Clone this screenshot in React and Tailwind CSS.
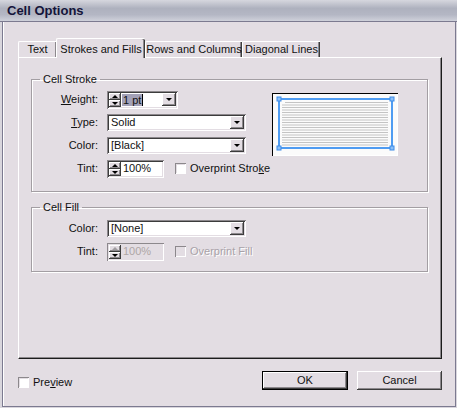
import React from 'react';

const sunken = 'shadow-[inset_1px_1px_0_#8c888c,inset_-1px_-1px_0_#ffffff,inset_2px_2px_0_#3c3c3c,inset_-2px_-2px_0_#e3dde3]';
const raised = 'shadow-[inset_-1px_-1px_0_#3c3c3c,inset_1px_1px_0_#ffffff,inset_-2px_-2px_0_#8c888c]';

function Arrow({ dir = 'down', dim = false }) {
  if (dir === 'down') {
    return <span className={`w-0 h-0 border-x-[3px] border-x-transparent border-t-[3px] ${dim ? 'border-t-[#a09ca0]' : 'border-t-black'}`} />;
  }
  return <span className={`w-0 h-0 border-x-[3px] border-x-transparent border-b-[3px] ${dim ? 'border-b-[#a09ca0]' : 'border-b-black'}`} />;
}

function Spinner({ dimUp = false }) {
  return (
    <div className="flex flex-col w-[12px] h-full py-[2px] ml-[2px]">
      <div className={`flex-1 flex items-center justify-center bg-[#e3dde3] ${raised}`}>
        <Arrow dir="up" dim={dimUp} />
      </div>
      <div className={`flex-1 flex items-center justify-center bg-[#e3dde3] ${raised}`}>
        <Arrow dir="down" />
      </div>
    </div>
  );
}

function DropButton() {
  return (
    <div className={`w-[14px] h-[13px] mr-[2px] flex items-center justify-center bg-[#e3dde3] ${raised}`}>
      <Arrow dir="down" />
    </div>
  );
}

function Select({ value }) {
  return (
    <div className={`w-[139px] h-[17px] flex items-center bg-white ${sunken}`}>
      <span className="flex-1 pl-[4px] leading-none">{value}</span>
      <DropButton />
    </div>
  );
}

function Check({ disabled = false }) {
  return (
    <span className={`inline-block w-[11px] h-[11px] ${disabled ? 'bg-[#e3dde3]' : 'bg-white'} shadow-[inset_1px_1px_0_#8c888c,inset_-1px_-1px_0_#ffffff,inset_2px_2px_0_#e3dde3]`} />
  );
}

function Row({ label, children }) {
  return (
    <div className="flex items-center h-[17px]">
      <div className="w-[67px] text-right pr-[1px]">{label}</div>
      <div className="ml-[8px] flex items-center">{children}</div>
    </div>
  );
}

function Preview() {
  const lines = Array.from({ length: 18 }, (_, i) => 9.5 + i * 2.5);
  return (
    <div className="w-[126px] h-[63px] bg-[#fbfbfb] shadow-[inset_1px_1px_0_#000,inset_-1px_-1px_0_#fff] mt-[2px]">
      <svg width="126" height="63" viewBox="0 0 126 63">
        {lines.map((y, i) => (
          <line key={i} x1={i === 0 ? 13 : 10} x2="116" y1={y} y2={y} stroke="#c4c4c4" strokeWidth="1" />
        ))}
        <rect x="7" y="6" width="113" height="49" fill="none" stroke="#4f9cf2" strokeWidth="2" />
        {[[7, 6], [120, 6], [7, 55], [120, 55]].map(([x, y], i) => (
          <rect key={i} x={x - 2} y={y - 2} width="4" height="4" fill="#8cc0f8" stroke="#3f8ce8" strokeWidth="1" />
        ))}
      </svg>
    </div>
  );
}

const etched = 'border border-[#a39ea3] shadow-[1px_1px_0_#ffffff,inset_1px_1px_0_#ffffff]';
const tab = 'h-[16px] flex items-center justify-center border-t border-l border-white shadow-[inset_-1px_0_0_#3c3c3c,inset_-2px_0_0_#8c888c] rounded-tl-[2px]';

export default function App() {
  return (
    <div className="w-[457px] h-[408px] flex flex-col bg-[#d9d6dd] pb-[1px] text-[11px] text-[#111] font-['Liberation_Sans',Arial,sans-serif]">
      {/* title bar */}
      <div className="h-[22px] flex items-center px-[7px] bg-[linear-gradient(to_bottom,#d6d7de_0%,#aeb1be_40%,#b4b7c4_70%,#cfd1da_100%)] border-b border-[#7c7a90]">
        <span className="font-bold text-[13px] text-[#14143a]">Cell Options</span>
      </div>

      <div className="flex-1 mx-[2px] mr-[1px] bg-[#e3dde3] border-x border-b border-[#7c7a90] pl-[15px] pt-[16px] shadow-[inset_1px_0_0_#ffffff]">
        {/* tabs */}
        <div className="flex items-end h-[19px]">
          <div className={`w-[38px] ${tab} shadow-[inset_-1px_0_0_#8c888c]`}>Text</div>
          <div className="relative z-10 w-[89px] h-[20px] -mb-[1px] flex items-start justify-center pt-[2px] bg-[#e3dde3] border-t border-l border-white shadow-[inset_-1px_0_0_#3c3c3c,inset_-2px_0_0_#8c888c] rounded-t-[2px]">
            Strokes and Fills
          </div>
          <div className={`w-[97px] ${tab}`}>Rows and Columns</div>
          <div className={`w-[78px] ${tab}`}>Diagonal Lines</div>
        </div>

        {/* panel */}
        <div className="w-[424px] h-[302px] border-t border-l border-white border-r border-b border-r-[#1c1c1c] border-b-[#1c1c1c] shadow-[inset_-1px_-1px_0_#8c888c] pl-[12px] pt-[15px]">
          <fieldset className={`w-[397px] h-[119px] px-0 pt-[5px] pb-0 ${etched}`}>
            <legend className="ml-[8px] px-[3px] leading-[13px]">Cell Stroke</legend>
            <div className="flex">
              <div className="w-[240px] flex flex-col gap-[6px]">
                <Row label={<><span className="underline">W</span>eight:</>}>
                  <div className={`w-[71px] h-[18px] flex items-center bg-white ${sunken}`}>
                    <Spinner />
                    <div className="flex-1 flex items-center pl-[1px]">
                      <span className="bg-[#a3a1b7] leading-[12px] px-[1px]">1 pt</span>
                      <span className="w-px h-[12px] bg-black" />
                    </div>
                    <DropButton />
                  </div>
                </Row>
                <Row label={<><span className="underline">T</span>ype:</>}>
                  <Select value="Solid" />
                </Row>
                <Row label="Color:">
                  <Select value="[Black]" />
                </Row>
                <Row label="Tint:">
                  <div className={`w-[57px] h-[18px] flex items-center bg-white ${sunken}`}>
                    <Spinner />
                    <span className="pl-[2px]">100%</span>
                  </div>
                  <div className="ml-[11px] flex items-center gap-[4px]">
                    <Check />
                    <span>Overprint Stro<span className="underline">k</span>e</span>
                  </div>
                </Row>
              </div>
              <Preview />
            </div>
          </fieldset>

          <fieldset className={`w-[397px] h-[71px] mt-[9px] px-0 pt-[6px] pb-0 ${etched}`}>
            <legend className="ml-[8px] px-[3px] leading-[13px]">Cell Fill</legend>
            <div className="flex flex-col gap-[6px]">
              <Row label="Color:">
                <Select value="[None]" />
              </Row>
              <Row label="Tint:">
                <div className="w-[57px] h-[18px] flex items-center bg-[#e3dde3] shadow-[inset_1px_1px_0_#8c888c,inset_-1px_-1px_0_#ffffff]">
                  <Spinner dimUp />
                  <span className="pl-[2px] text-[#aea6a6]">100%</span>
                </div>
                <div className="ml-[11px] flex items-center gap-[4px]">
                  <Check disabled />
                  <span className="text-[#a8a2a8] [text-shadow:1px_1px_0_#ffffff]">Overprint Fill</span>
                </div>
              </Row>
            </div>
          </fieldset>
        </div>

        {/* bottom */}
        <div className="flex items-center mt-[12px] w-[424px]">
          <div className="flex items-center gap-[4px] mt-[3px]">
            <Check />
            <span>Pre<span className="underline">v</span>iew</span>
          </div>
          <div className="ml-auto flex gap-[9px]">
            <button className="w-[86px] h-[19px] border border-black bg-[#e3dde3] shadow-[inset_-1px_-1px_0_#3c3c3c,inset_1px_1px_0_#ffffff,inset_-2px_-2px_0_#8c888c] leading-none">
              OK
            </button>
            <button className={`w-[85px] h-[19px] bg-[#e3dde3] ${raised} leading-none`}>
              Cancel
            </button>
          </div>
        </div>
      </div>
    </div>
  );
}
